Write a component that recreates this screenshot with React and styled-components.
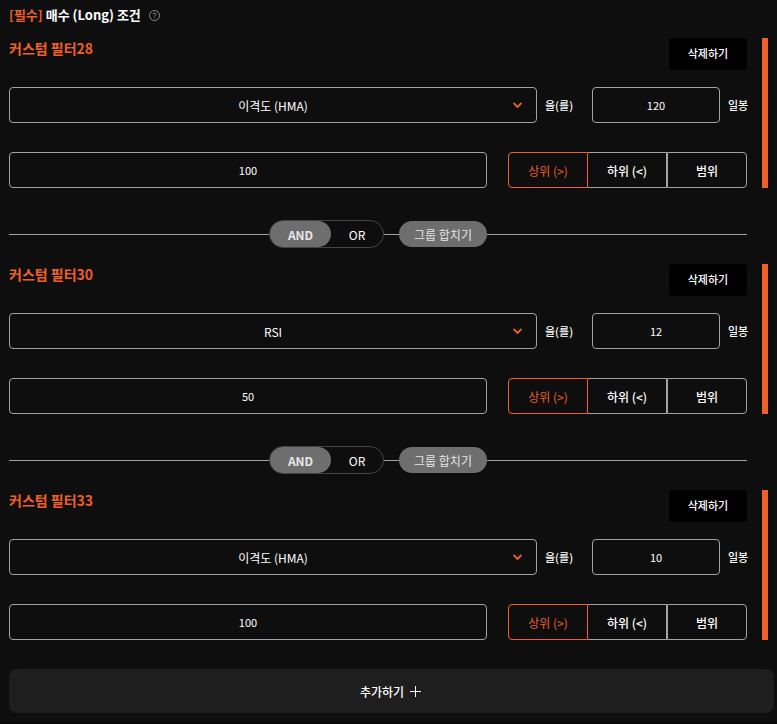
import React, { useState } from "react";
import styled, { createGlobalStyle } from "styled-components";

const GlobalStyle = createGlobalStyle`
  * {
    box-sizing: border-box;
  }

  body {
    margin: 0;
    background: #0e0e0e;
    color: #ffffff;
    font-family: "Noto Sans CJK KR", "Noto Sans", sans-serif;
    font-size: 12px;
  }

  button,
  input,
  select {
    margin: 0;
    font-family: inherit;
    color: inherit;
  }
`;

const Page = styled.main`
  padding: 4px 3px 9px 9px;
  border-bottom: 2px solid #060606;
`;

const Heading = styled.h1`
  display: flex;
  align-items: center;
  gap: 8px;
  margin: 0 0 12px;
  font-size: 13px;
  font-weight: 700;
  line-height: 22px;
`;

const Required = styled.span`
  color: #f05f28;
`;

const HelpButton = styled.button`
  display: flex;
  padding: 0;
  border: 0;
  background: none;
  color: #8c8c8c;
  cursor: pointer;
`;

const Group = styled.section`
  display: flex;
  flex-direction: column;
  margin-right: 6px;
  padding-right: 15px;
  border-right: 6px solid #f05f28;
`;

const GroupHeader = styled.div`
  display: flex;
  justify-content: space-between;
  align-items: flex-start;
  margin-bottom: 17px;
`;

const GroupTitle = styled.h2`
  margin: 0;
  color: #f05f28;
  font-size: 14px;
  font-weight: 700;
  line-height: 20px;
`;

const DeleteButton = styled.button`
  width: 78px;
  height: 32px;
  padding: 0 0 2px;
  border: 0;
  border-radius: 4px;
  background: #000000;
  font-size: 11px;
  font-weight: 500;
  cursor: pointer;
`;

const IndicatorRow = styled.div`
  display: flex;
  align-items: center;
  gap: 8px;
  margin-bottom: 29px;
`;

const SelectBox = styled.div`
  position: relative;
  flex: 1;
`;

const Select = styled.select`
  display: block;
  width: 100%;
  height: 36px;
  padding: 0;
  appearance: none;
  border: 1px solid #a3a3a3;
  border-radius: 4px;
  background: #0e0e0e;
  font-size: 12px;
  text-align: center;
  text-align-last: center;
`;

const Chevron = styled.svg`
  position: absolute;
  top: 15px;
  right: 15px;
  pointer-events: none;
`;

const FieldLabel = styled.label`
  width: ${(props) => props.$width};
  font-size: 11px;
  font-weight: 500;
  white-space: nowrap;
`;

const NumberInput = styled.input`
  width: ${(props) => props.$width || "auto"};
  flex: ${(props) => (props.$width ? "none" : "1")};
  min-width: 0;
  height: 36px;
  padding: 0;
  border: 1px solid #a3a3a3;
  border-radius: 4px;
  background: #0e0e0e;
  font-size: 11px;
  text-align: center;
`;

const ValueRow = styled.div`
  display: flex;
  gap: 21px;
`;

const Segments = styled.div`
  display: flex;
  width: 239px;
`;

const Segment = styled.button`
  flex: 1;
  height: 36px;
  padding: 0;
  border: 1px solid ${(props) => (props.$active ? "#f05f28" : "#a3a3a3")};
  background: none;
  color: ${(props) => (props.$active ? "#f05f28" : "#ffffff")};
  font-size: 12px;
  font-weight: ${(props) => (props.$active ? 400 : 500)};
  cursor: pointer;

  &:first-child {
    border-radius: 4px 0 0 4px;
  }

  &:last-child {
    border-radius: 0 4px 4px 0;
  }

  ${(props) => props.$joined && "border-left: 0;"}
`;

const Connector = styled.div`
  display: flex;
  align-items: center;
  margin: 32px 27px 16px 0;
`;

const Line = styled.span`
  flex: ${(props) => (props.$short ? "0 0 15px" : "1")};
  height: 1px;
  background: #a3a3a3;
`;

const Toggle = styled.div`
  display: flex;
  width: 115px;
  height: 28px;
  border: 1px solid #444444;
  border-radius: 14px;
`;

const ToggleButton = styled.button`
  width: ${(props) => (props.$active ? "61px" : "52px")};
  padding: 0;
  border: 0;
  border-radius: 13px;
  background: ${(props) => (props.$active ? "#6e6e6e" : "none")};
  color: ${(props) => (props.$active ? "#e6e6e6" : "#ffffff")};
  font-size: 12px;
  font-weight: ${(props) => (props.$active ? 700 : 400)};
  cursor: pointer;
`;

const MergeButton = styled.button`
  width: 88px;
  height: 26px;
  padding: 0;
  border: 0;
  border-radius: 13px;
  background: #6e6e6e;
  color: #e6e6e6;
  font-size: 12px;
  cursor: pointer;
`;

const AddButton = styled.button`
  display: flex;
  align-items: center;
  justify-content: center;
  gap: 6px;
  width: 100%;
  height: 44px;
  margin-top: 29px;
  padding: 0 2px 0 0;
  border: 0;
  border-radius: 8px;
  background: #1e1e1e;
  font-size: 12px;
  font-weight: 500;
  cursor: pointer;
`;

const filters = [
  { id: 28, indicator: "이격도 (HMA)", period: 120, value: 100 },
  { id: 30, indicator: "RSI", period: 12, value: 50 },
  { id: 33, indicator: "이격도 (HMA)", period: 10, value: 100 },
];

const ranges = ["상위 (>)", "하위 (<)", "범위"];

const HelpIcon = () => (
  <svg width="11" height="11" viewBox="0 0 11 11" fill="none" stroke="currentColor">
    <circle cx="5.5" cy="5.5" r="5" />
    <path d="M4 4.4C4 3.5 4.6 3 5.5 3S7 3.5 7 4.3C7 5.3 5.5 5.3 5.5 6.4" />
    <path d="M5.5 7.4V8.4" />
  </svg>
);

const CustomFilter = ({ filter }) => {
  const [range, setRange] = useState(ranges[0]);

  return (
    <Group>
      <GroupHeader>
        <GroupTitle>커스텀 필터{filter.id}</GroupTitle>
        <DeleteButton type="button">삭제하기</DeleteButton>
      </GroupHeader>
      <IndicatorRow>
        <SelectBox>
          <Select id={`indicator-${filter.id}`} defaultValue={filter.indicator}>
            <option>이격도 (HMA)</option>
            <option>RSI</option>
          </Select>
          <Chevron width="9" height="7" viewBox="0 0 9 7" fill="none">
            <path d="M0.5 1L4.5 5L8.5 1" stroke="#f05f28" strokeWidth="1.8" />
          </Chevron>
        </SelectBox>
        <FieldLabel $width="39px" htmlFor={`indicator-${filter.id}`}>
          을(를)
        </FieldLabel>
        <NumberInput
          $width="128px"
          id={`period-${filter.id}`}
          defaultValue={filter.period}
        />
        <FieldLabel $width="19px" htmlFor={`period-${filter.id}`}>
          일봉
        </FieldLabel>
      </IndicatorRow>
      <ValueRow>
        <NumberInput aria-label="기준값" defaultValue={filter.value} />
        <Segments>
          {ranges.map((name, i) => (
            <Segment
              key={name}
              type="button"
              $active={range === name}
              $joined={i > 0 && ranges[i - 1] === range}
              aria-pressed={range === name}
              onClick={() => setRange(name)}
            >
              {name}
            </Segment>
          ))}
        </Segments>
      </ValueRow>
    </Group>
  );
};

const GroupConnector = () => {
  const [operator, setOperator] = useState("AND");

  return (
    <Connector>
      <Line />
      <Toggle>
        {["AND", "OR"].map((name) => (
          <ToggleButton
            key={name}
            type="button"
            $active={operator === name}
            aria-pressed={operator === name}
            onClick={() => setOperator(name)}
          >
            {name}
          </ToggleButton>
        ))}
      </Toggle>
      <Line $short />
      <MergeButton type="button">그룹 합치기</MergeButton>
      <Line />
    </Connector>
  );
};

const App = () => (
  <>
    <GlobalStyle />
    <Page>
      <Heading>
        <span>
          <Required>[필수]</Required> 매수 (Long) 조건
        </span>
        <HelpButton type="button" aria-label="도움말">
          <HelpIcon />
        </HelpButton>
      </Heading>
      {filters.map((filter, i) => (
        <React.Fragment key={filter.id}>
          {i > 0 && <GroupConnector />}
          <CustomFilter filter={filter} />
        </React.Fragment>
      ))}
      <AddButton type="button">
        추가하기
        <svg width="11" height="11" viewBox="0 0 11 11" stroke="#ffffff">
          <path d="M0 5.5H11M5.5 0V11" />
        </svg>
      </AddButton>
    </Page>
  </>
);

export default App;
